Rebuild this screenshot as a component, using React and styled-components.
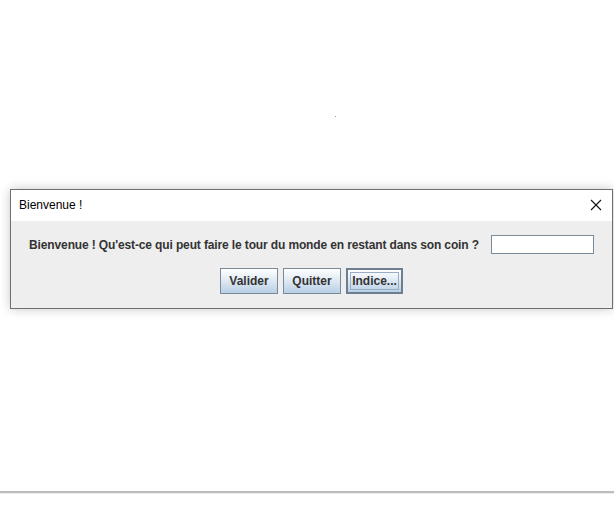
import React from "react";
import styled, { createGlobalStyle } from "styled-components";

const Global = createGlobalStyle`
  html, body {
    margin: 0;
    padding: 0;
    background: #ffffff;
  }
  #root {
    width: 614px;
    height: 524px;
    overflow: hidden;
  }
`;

const Screen = styled.div`
  width: 614px;
  height: 524px;
  display: flex;
  flex-direction: column;
  padding-top: 116px;
  box-sizing: border-box;
  background: #ffffff;
`;

const Dot = styled.div`
  width: 1px;
  height: 1px;
  margin-left: 335px;
  background: #9a9a9a;
`;

const Dialog = styled.div`
  margin-top: 72px;
  margin-left: 10px;
  width: 603px;
  height: 120px;
  box-sizing: border-box;
  border: 1px solid #6f6f6f;
  box-shadow: 0 0 10px rgba(0, 0, 0, 0.22);
  display: flex;
  flex-direction: column;
  background: #eeeeee;
`;

const TitleBar = styled.div`
  height: 30px;
  background: #ffffff;
  display: flex;
  align-items: center;
  justify-content: space-between;
  padding: 0 10px 1px 8px;
  font-family: "Liberation Sans", Arial, sans-serif;
  font-size: 12px;
  color: #000000;
`;

const Body = styled.div`
  flex: 1;
  display: flex;
  flex-direction: column;
  align-items: center;
  padding-top: 14px;
  gap: 14px;
  font-family: "Liberation Sans", Arial, sans-serif;
  font-weight: bold;
  font-size: 12px;
  color: #333333;
`;

const Row = styled.div`
  display: flex;
  align-items: center;
  gap: ${(p) => p.gap || 12}px;
`;

const Label = styled.span`
  letter-spacing: -0.13px;
`;

const Field = styled.div`
  width: 103px;
  height: 19px;
  box-sizing: border-box;
  border: 1px solid #7a8a99;
  background: #ffffff;
  box-shadow: inset 0 0 0 1px #ffffff;
`;

const Button = styled.div`
  height: 26px;
  width: ${(p) => p.w}px;
  box-sizing: border-box;
  border: ${(p) => (p.focused ? "2px solid #6d7e91" : "1px solid #7a8a99")};
  background: linear-gradient(#ffffff 0%, #e8eff7 35%, #b8cfe5 100%);
  display: flex;
  align-items: center;
  justify-content: center;
  color: #333333;
`;

const FocusRing = styled.span`
  border: 1px solid #99aec4;
  padding: 1px 1px 0 1px;
  line-height: 15px;
`;

const Rule = styled.div`
  margin-top: auto;
  margin-bottom: 30px;
  height: 2px;
  background: #bdbdbd;
  border-bottom: 1px solid #ededed;
`;

const CloseIcon = () => (
  <svg width="12" height="12" viewBox="0 0 12 12">
    <path d="M1 1 L11 11 M11 1 L1 11" stroke="#111" strokeWidth="1.1" fill="none" />
  </svg>
);

export default function App() {
  return (
    <Screen>
      <Global />
      <Dot />
      <Dialog>
        <TitleBar>
          <span>Bienvenue !</span>
          <CloseIcon />
        </TitleBar>
        <Body>
          <Row gap={12}>
            <Label>Bienvenue ! Qu'est-ce qui peut faire le tour du monde en restant dans son coin ?</Label>
            <Field />
          </Row>
          <Row gap={5}>
            <Button w={58}>Valider</Button>
            <Button w={58}>Quitter</Button>
            <Button w={57} focused>
              <FocusRing>Indice...</FocusRing>
            </Button>
          </Row>
        </Body>
      </Dialog>
      <Rule />
    </Screen>
  );
}
